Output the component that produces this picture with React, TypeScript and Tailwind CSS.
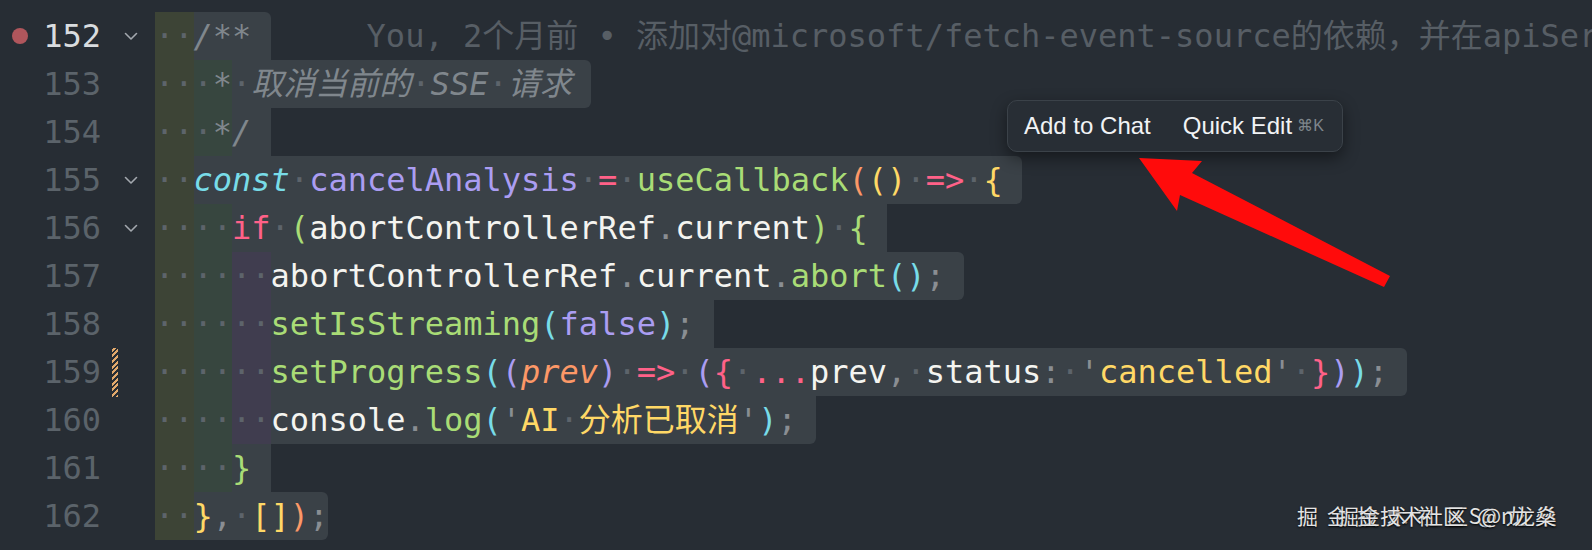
import React from 'react';

type Tok = [string, string];
type Group = { bg: string; text: string; cls?: string };
type Line = {
  n: number;
  groups: Group[];
  tokens: Tok[];
  round: string;
  extra?: boolean;
  blame?: boolean;
};

// token colours (monokai-ish)
const W = 'text-[#f4f4f0]';
const R = 'text-[#ff6188]';
const O = 'text-[#fc9867]';
const Y = 'text-[#ffd866]';
const G = 'text-[#a9dc76]';
const CY = 'text-[#78dce8]';
const P = 'text-[#ab9df2]';
const D = 'text-[#8a8e93]';
const M = 'text-[#80878d] italic';

// indent rainbow columns (already mixed with selection)
const OLIVE = 'bg-[#3d4436]';
const GREEN = 'bg-[#37463f]';
const PURPLE = 'bg-[#403d4f]';

const g1: Group = { bg: OLIVE, text: '  ' };
const g2: Group = { bg: GREEN, text: '  ' };
const g3: Group = { bg: PURPLE, text: '  ' };

const lines: Line[] = [
  { n: 152, groups: [g1], tokens: [['/**', M]], round: 'rounded-tr-md', extra: true, blame: true },
  {
    n: 153,
    groups: [g1, { bg: GREEN, text: ' *', cls: M }],
    tokens: [[' 取消当前的 SSE 请求', M]],
    round: 'rounded-r-md',
    extra: true,
  },
  { n: 154, groups: [g1, { bg: GREEN, text: ' *', cls: M }], tokens: [['/', M]], round: '', extra: true },
  {
    n: 155,
    groups: [g1],
    tokens: [
      ['const', `${CY} italic`],
      [' ', ''],
      ['cancelAnalysis', P],
      [' ', ''],
      ['=', R],
      [' ', ''],
      ['useCallback', G],
      ['(', O],
      ['()', Y],
      [' ', ''],
      ['=>', R],
      [' ', ''],
      ['{', Y],
    ],
    round: 'rounded-r-md',
    extra: true,
  },
  {
    n: 156,
    groups: [g1, g2],
    tokens: [
      ['if', R],
      [' ', ''],
      ['(', G],
      ['abortControllerRef', W],
      ['.', D],
      ['current', W],
      [')', G],
      [' ', ''],
      ['{', G],
    ],
    round: '',
    extra: true,
  },
  {
    n: 157,
    groups: [g1, g2, g3],
    tokens: [
      ['abortControllerRef', W],
      ['.', D],
      ['current', W],
      ['.', D],
      ['abort', G],
      ['()', CY],
      [';', D],
    ],
    round: 'rounded-r-md',
    extra: true,
  },
  {
    n: 158,
    groups: [g1, g2, g3],
    tokens: [
      ['setIsStreaming', G],
      ['(', CY],
      ['false', P],
      [')', CY],
      [';', D],
    ],
    round: '',
    extra: true,
  },
  {
    n: 159,
    groups: [g1, g2, g3],
    tokens: [
      ['setProgress', G],
      ['(', CY],
      ['(', P],
      ['prev', `${O} italic`],
      [')', P],
      [' ', ''],
      ['=>', R],
      [' ', ''],
      ['(', P],
      ['{', R],
      [' ', ''],
      ['...', R],
      ['prev', W],
      [',', D],
      [' ', ''],
      ['status', W],
      [':', D],
      [' ', ''],
      ["'", D],
      ['cancelled', Y],
      ["'", D],
      [' ', ''],
      ['}', R],
      [')', P],
      [')', CY],
      [';', D],
    ],
    round: 'rounded-r-md',
    extra: true,
  },
  {
    n: 160,
    groups: [g1, g2, g3],
    tokens: [
      ['console', W],
      ['.', D],
      ['log', G],
      ['(', CY],
      ["'", D],
      ['AI 分析已取消', Y],
      ["'", D],
      [')', CY],
      [';', D],
    ],
    round: 'rounded-br-md',
    extra: true,
  },
  { n: 161, groups: [g1, g2], tokens: [['}', G]], round: '', extra: true },
  {
    n: 162,
    groups: [g1],
    tokens: [
      ['}', Y],
      [',', D],
      [' ', ''],
      ['[]', Y],
      [')', O],
      [';', D],
    ],
    round: 'rounded-r-md',
  },
];

function Spaced({ text, cls }: { text: string; cls?: string }) {
  const parts = text.split(/( )/);
  return (
    <>
      {parts.map((p, i) =>
        p === ' ' ? (
          <span key={i} className="text-[#5d646b] not-italic">
            ·
          </span>
        ) : p ? (
          <span key={i} className={cls}>
            {p}
          </span>
        ) : null,
      )}
    </>
  );
}

function Chevron() {
  return (
    <svg width="14" height="10" viewBox="0 0 14 10" fill="none">
      <path d="M1.5 2.5 L7 8 L12.5 2.5" stroke="#a3a8ae" strokeWidth="1.6" strokeLinecap="round" strokeLinejoin="round" />
    </svg>
  );
}

function GutterRow({ n }: { n: number }) {
  const active = n === 152;
  const fold = n === 152 || n === 155 || n === 156;
  return (
    <div className="flex h-12 items-center">
      <div className="flex w-10 justify-center">
        {active && <div className="h-4 w-4 rounded-full bg-[#b0565c]" />}
      </div>
      <span className={`w-[61px] text-right ${active ? 'text-[#d9dcdf]' : 'text-[#5b636a]'}`}>{n}</span>
      <div className="ml-[11px] flex h-12 w-[6px] items-center">
        {n === 159 && (
          <div className="h-[49px] w-[6px] bg-[repeating-linear-gradient(-45deg,#e2a96c_0px,#e2a96c_2px,transparent_2px,transparent_4px)]" />
        )}
      </div>
      <div className="ml-[6px] flex w-[14px] items-center">{fold && <Chevron />}</div>
    </div>
  );
}

function CodeLine({ line }: { line: Line }) {
  return (
    <div className="flex h-12 items-stretch whitespace-pre">
      {line.groups.map((g, i) => (
        <span key={i} className={`${g.bg} flex items-center`}>
          <Spaced text={g.text} cls={g.cls} />
        </span>
      ))}
      <span className={`flex items-center bg-[#3a4147] ${line.round}`}>
        {line.tokens.map((t, i) => (
          <Spaced key={i} text={t[0]} cls={t[1]} />
        ))}
        {line.extra && <span>{'\u00a0'}</span>}
      </span>
      {line.blame && (
        <span className="ml-[96px] flex items-center text-[#575e65]">
          You, 2个月前 • 添加对@microsoft/fetch-event-source的依赖，并在apiService中实现流式分析功能
        </span>
      )}
    </div>
  );
}

export default function App() {
  return (
    <div className="relative flex h-[550px] w-[1592px] overflow-hidden bg-[#272d34] font-['DejaVu_Sans_Mono','Noto_Sans_CJK_SC',monospace] text-[32px] leading-[48px]">
      <div className="flex w-[155px] shrink-0 flex-col pt-3">
        {lines.map((l) => (
          <GutterRow key={l.n} n={l.n} />
        ))}
      </div>
      <div className="flex min-w-0 flex-1 flex-col overflow-hidden pt-3">
        {lines.map((l) => (
          <CodeLine key={l.n} line={l} />
        ))}
      </div>

      {/* inline action popup */}
      <div className="absolute left-[1007px] top-[100px] flex h-[52px] w-[336px] items-center rounded-[10px] border border-[#3b4249] bg-[#282e35] px-4 font-['Liberation_Sans',sans-serif] leading-none shadow-[0_6px_16px_rgba(0,0,0,0.45)]">
        <span className="text-[24px] text-[#f1f3f5]">Add to Chat</span>
        <span className="ml-8 text-[24px] text-[#f1f3f5]">Quick Edit</span>
        <span className="ml-[5px] text-[16px] text-[#7f868c]">⌘K</span>
      </div>

      {/* annotation arrow */}
      <svg className="pointer-events-none absolute inset-0" width="1592" height="550" viewBox="0 0 1592 550">
        <polygon
          points="1139,158 1202,161 1192,173 1390,276 1384,287 1180,195 1177,211"
          fill="#ff0b0b"
        />
      </svg>

      {/* watermark */}
      <div className="pointer-events-none absolute left-[1297px] top-[505px] whitespace-nowrap font-['Noto_Sans_CJK_SC',sans-serif] text-[21px] leading-none tracking-[9px] text-[#e4e4e4] [text-shadow:0_1px_2px_rgba(0,0,0,0.9)]">
        掘金技术社区@龙燊
      </div>
      <div className="pointer-events-none absolute left-[1338px] top-[505px] whitespace-nowrap font-['Noto_Sans_CJK_SC',sans-serif] text-[21px] leading-none text-[#e4e4e4] [text-shadow:0_1px_2px_rgba(0,0,0,0.9)]">
        掘金技术社区 S@n龙燊
      </div>
    </div>
  );
}
